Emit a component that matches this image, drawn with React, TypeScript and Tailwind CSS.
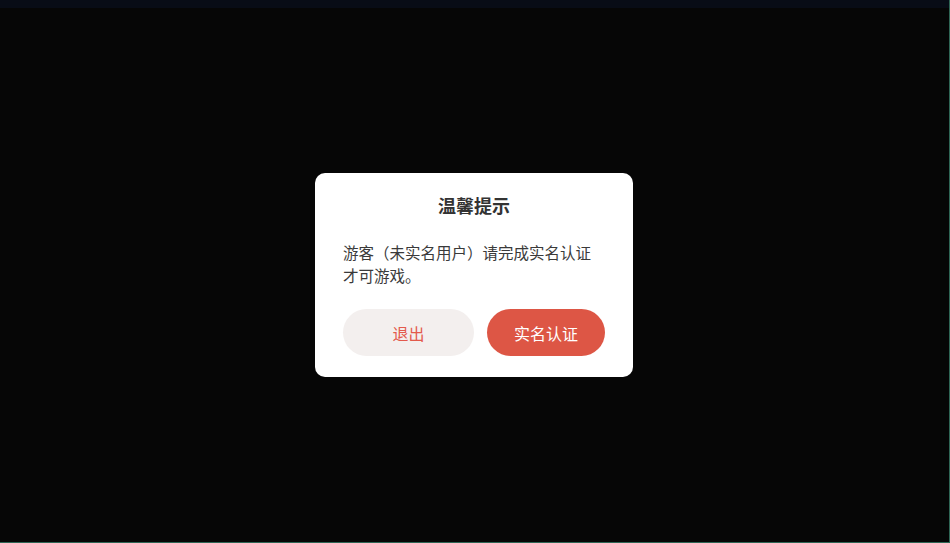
import React from 'react';

const font = { fontFamily: '"Noto Sans CJK SC", "Noto Sans", sans-serif' };

export default function App() {
  return (
    <div
      className="flex h-[543px] w-[950px] flex-col overflow-hidden border-r border-b border-[#2f6655] bg-[#060606]"
      style={font}
    >
      {/* top strip */}
      <div className="h-[8px] w-full shrink-0 bg-[#080c16]" />

      <div className="flex flex-1 items-start justify-center pt-[165px] pr-[1px]">
        <div className="w-[318px] rounded-[10px] bg-white px-[28px] pt-[22px] pb-[21px]">
          <h2 className="text-center text-[18px] leading-[20px] font-bold text-[#333333]">温馨提示</h2>
          <p className="mt-[26px] text-[15.5px] leading-[23px] text-[#3a3a3a]">
            游客（未实名用户）请完成实名认证才可游戏。
          </p>
          <div className="mt-[22px] flex gap-[13px]">
            <button className="h-[47px] w-[131px] rounded-full bg-[#f3efee] text-[16px] text-[#e35a4c]">
              退出
            </button>
            <button className="h-[47px] w-[118px] rounded-full bg-[#dd5645] text-[16px] text-white">
              实名认证
            </button>
          </div>
        </div>
      </div>
    </div>
  );
}
